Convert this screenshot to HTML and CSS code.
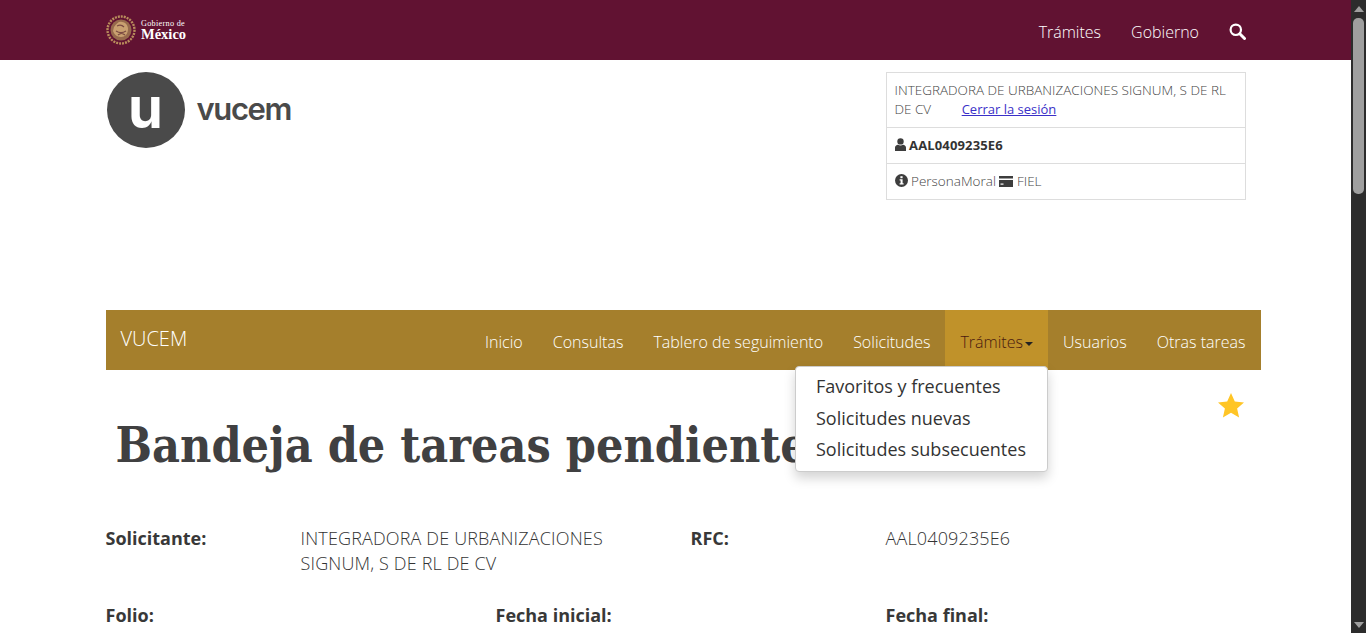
FILE: index.html
```html
<!DOCTYPE html>
<html lang="es">
<head>
  <meta charset="UTF-8" />
  <meta name="viewport" content="width=device-width, initial-scale=1.0"/>
  <title>VUCEM | Bandeja de tareas pendientes</title>
  <link rel="stylesheet" href="styles.css">
</head>
<body>
  <div class="page">
    <header class="gob-bar">
      <div class="gob-inner">
        <a class="gob-logo" href="#">
          <svg class="gob-seal" width="30" height="30" viewBox="0 0 30 30">
            <circle cx="15" cy="15" r="13.500" fill="none" stroke="#b98d5c" stroke-width="2.400" stroke-dasharray="2 1"/>
            <circle cx="15" cy="15" r="10.500" fill="#96694c"/>
            <path d="M8 12c3-4 5-6 8-5 4 0 6 4 6 7 0 5-3 8-7 8s-7-3-8-6z" fill="#c9a070"/>
            <path d="M11 11c2-1 5-1 7 1M10 16c3 2 7 2 10 0M12 20c2-2 5-2 7 0" fill="none" stroke="#7a4a42" stroke-width="1.200"/>
          </svg>
          <span class="gob-words">
            <span class="gob-small">Gobierno de</span>
            <span class="gob-big">México</span>
          </span>
        </a>
        <nav class="gob-links">
          <a href="#">Trámites</a>
          <a href="#">Gobierno</a>
          <a href="#" class="gob-search">
            <svg width="17" height="17" viewBox="0 0 17 17">
              <circle cx="6.800" cy="6.800" r="5.200" fill="none" stroke="#fff" stroke-width="2.200"/>
              <path d="M10.800 10.800l4.700 4.700" stroke="#fff" stroke-width="3" stroke-linecap="round"/>
            </svg>
          </a>
        </nav>
      </div>
    </header>

    <div class="container">
      <div class="brand-row">
        <div class="vucem-logo">
          <span class="vucem-circle">u</span>
          <span class="vucem-word">vucem</span>
        </div>
        <div class="user-box">
          <div class="user-row">
            <div>INTEGRADORA DE URBANIZACIONES SIGNUM, S DE RL</div>
            <div>DE CV <a href="#" class="logout">Cerrar la sesión</a></div>
          </div>
          <div class="user-row user-rfc">
            <svg class="ico" width="11" height="13" viewBox="0 0 11 13">
              <circle cx="5.500" cy="3.400" r="3.200" fill="#3d3d3d"/>
              <path d="M0 13V9.600C0 8 1.400 7 3 6.800c1.500 1 3.500 1 5 0 1.600.2 3 1.200 3 2.800V13z" fill="#3d3d3d"/>
            </svg>
            AAL0409235E6
          </div>
          <div class="user-row">
            <svg class="ico" width="13" height="13" viewBox="0 0 13 13">
              <circle cx="6.500" cy="6.500" r="6.500" fill="#3d3d3d"/>
              <rect x="5.400" y="2.200" width="2.200" height="2" fill="#fff"/>
              <path d="M4.600 5.300h3v4h1v1.300h-4V9.300h1V6.600h-1z" fill="#fff"/>
            </svg>
            PersonaMoral
            <svg class="ico" width="14" height="11" viewBox="0 0 14 11">
              <path d="M0 0h14v2.500H0zM0 4h14v7H0z" fill="#3d3d3d"/>
              <rect x="1.500" y="7.500" width="3" height="1.200" fill="#fff"/>
            </svg>
            FIEL
          </div>
        </div>
      </div>

      <nav class="main-nav">
        <a href="#" class="nav-brand">VUCEM</a>
        <ul class="nav-items">
          <li><a href="#">Inicio</a></li>
          <li><a href="#">Consultas</a></li>
          <li><a href="#">Tablero de seguimiento</a></li>
          <li><a href="#">Solicitudes</a></li>
          <li class="open">
            <a href="#">Trámites<span class="caret"></span></a>
            <ul class="dropdown">
              <li><a href="#">Favoritos y frecuentes</a></li>
              <li><a href="#">Solicitudes nuevas</a></li>
              <li><a href="#">Solicitudes subsecuentes</a></li>
            </ul>
          </li>
          <li><a href="#">Usuarios</a></li>
          <li><a href="#">Otras tareas</a></li>
        </ul>
      </nav>

      <div class="title-row">
        <h1>Bandeja de tareas pendientes</h1>
        <svg class="star" width="26" height="25" viewBox="0 0 26 25">
          <path d="M13 0l3.800 8.400 9.200 1-6.900 6.100 2 9-8.100-4.700-8.100 4.700 2-9L0 9.400l9.200-1z" fill="#ffc526"/>
        </svg>
      </div>

      <div class="grid row-a">
        <div class="col-2"><label>Solicitante:</label></div>
        <div class="col-4 value">INTEGRADORA DE URBANIZACIONES SIGNUM, S DE RL DE CV</div>
        <div class="col-2"><label>RFC:</label></div>
        <div class="col-4 value">AAL0409235E6</div>
      </div>
      <div class="grid row-b">
        <div class="col-4"><label>Folio:</label></div>
        <div class="col-4"><label>Fecha inicial:</label></div>
        <div class="col-4"><label>Fecha final:</label></div>
      </div>
    </div>
  </div>

  <aside class="scrollbar">
    <span class="arrow-up"></span>
    <span class="thumb"></span>
    <span class="arrow-down"></span>
  </aside>
</body>
</html>
```
FILE: styles.css
```css
html, body {
  height: 100%;
}
body {
  margin: 0;
  display: flex;
  overflow: hidden;
  background-color: #fff;
  color: #404041;
  font-family: 'Open Sans', 'Noto Sans', sans-serif;
  font-size: 13px;
}
a {
  text-decoration: none;
  color: inherit;
}
ul {
  list-style: none;
  margin: 0;
  padding: 0;
}
.page {
  flex: 1;
  min-width: 0;
  overflow: hidden;
}
.gob-bar {
  height: 60px;
  background-color: #611232;
}
.gob-inner {
  width: 1140px;
  height: 100%;
  margin-left: 106px;
  display: flex;
  align-items: center;
  justify-content: space-between;
}
.gob-logo {
  display: flex;
  align-items: center;
  gap: 5px;
  color: #fff;
}
.gob-words {
  display: flex;
  flex-direction: column;
  font-family: 'Liberation Serif', serif;
}
.gob-small {
  font-size: 8.200px;
  line-height: 8px;
  letter-spacing: 0.300px;
}
.gob-big {
  font-size: 14.500px;
  line-height: 12px;
  font-weight: bold;
}
.gob-links {
  display: flex;
  align-items: center;
  gap: 30px;
  font-size: 16px;
  font-weight: 300;
  color: #fff;
}
.gob-links a {
  padding-top: 4px;
}
.gob-links .gob-search {
  display: flex;
  padding-top: 0;
  margin-top: 2px;
}
.container {
  width: 1170px;
  margin-left: 90.500px;
}
.brand-row {
  height: 250px;
  box-sizing: border-box;
  padding: 12px 15px 0;
  display: flex;
  justify-content: space-between;
  align-items: flex-start;
}
.vucem-logo {
  display: flex;
  align-items: center;
  gap: 12px;
  margin-left: 1px;
}
.vucem-circle {
  width: 78px;
  height: 76px;
  border-radius: 50%;
  background-color: #4a4a4a;
  color: #fff;
  font-family: Inter, 'Liberation Sans', sans-serif;
  font-weight: 700;
  font-size: 56px;
  line-height: 72px;
  text-align: center;
}
.vucem-word {
  font-family: Inter, 'Liberation Sans', sans-serif;
  font-weight: 600;
  font-size: 31px;
  letter-spacing: -1.400px;
  line-height: 28px;
  color: #4a4a4a;
  margin-top: -2px;
}
.user-box {
  width: 360px;
  box-sizing: border-box;
  border: 1px solid #ddd;
}
.user-row {
  padding: 8px;
  font-size: 13.500px;
  font-weight: 300;
  line-height: 19px;
  border-bottom: 1px solid #ddd;
  color: #444;
}
.user-row:last-child {
  border-bottom: 0;
}
.user-rfc {
  font-size: 13px;
  font-weight: bold;
  letter-spacing: 0.150px;
  color: #333;
}
.ico {
  vertical-align: -1px;
}
.logout {
  margin-left: 27px;
  font-size: 13px;
  font-weight: 400;
  color: #3a30c8;
  text-decoration: underline;
}
.main-nav {
  height: 60px;
  margin-left: 15px;
  background-color: #a57f2c;
  display: flex;
  justify-content: space-between;
  color: #fff;
}
.nav-brand {
  padding: 0 15px;
  font-size: 20px;
  font-weight: 300;
  line-height: 58px;
}
.nav-items {
  display: flex;
}
.nav-items > li {
  position: relative;
}
.nav-items > li > a {
  display: block;
  padding: 0 15px;
  font-size: 16.050px;
  font-weight: 300;
  line-height: 64px;
  height: 60px;
}
.nav-items > li.open > a {
  background-color: #c0922a;
  color: #4a1a10;
}
.caret {
  display: inline-block;
  margin-left: 2px;
  vertical-align: middle;
  border-top: 4px solid #222;
  border-left: 4px solid transparent;
  border-right: 4px solid transparent;
}
.dropdown {
  position: absolute;
  top: 56px;
  right: 0;
  width: 253px;
  box-sizing: border-box;
  padding: 4px 0 5px;
  background-color: #fff;
  color: #333;
  border: 1px solid #ccc;
  border-radius: 4px;
  box-shadow: 0 6px 12px rgba(0, 0, 0, 0.175);
  z-index: 10;
}
.dropdown a {
  display: block;
  padding: 0 20px;
  font-size: 18px;
  line-height: 31.500px;
  white-space: nowrap;
}
.title-row {
  height: 135px;
  box-sizing: border-box;
  padding: 23px 17px 0 25px;
  display: flex;
  justify-content: space-between;
  align-items: flex-start;
}
h1 {
  margin: 22px 0 0;
  font-family: 'DejaVu Serif Condensed', 'DejaVu Serif', serif;
  font-stretch: condensed;
  font-size: 48px;
  font-weight: bold;
  line-height: 60px;
  white-space: nowrap;
  color: #404041;
}
.star {
  flex: none;
}
.grid {
  display: grid;
  grid-template-columns: repeat(12, 1fr);
}
.grid > div {
  padding: 0 15px;
  font-size: 18px;
  line-height: 25px;
}
.col-2 {
  grid-column: span 2;
}
.col-4 {
  grid-column: span 4;
}
.row-a {
  height: 77px;
  padding-top: 21px;
}
label {
  font-weight: bold;
  color: #383838;
}
.value {
  font-weight: 300;
  letter-spacing: 0.150px;
  color: #333;
}
.scrollbar {
  width: 15px;
  height: 100%;
  box-sizing: border-box;
  padding: 6px 2px 5px;
  background-color: #2c2c2c;
  display: flex;
  flex-direction: column;
  align-items: center;
}
.arrow-up {
  border-bottom: 6px solid #9f9f9f;
  border-left: 5px solid transparent;
  border-right: 5px solid transparent;
}
.thumb {
  width: 11px;
  height: 176px;
  margin-top: 6px;
  border-radius: 5px;
  background-color: #9f9f9f;
}
.arrow-down {
  margin-top: auto;
  border-top: 6px solid #9f9f9f;
  border-left: 5px solid transparent;
  border-right: 5px solid transparent;
}
```
